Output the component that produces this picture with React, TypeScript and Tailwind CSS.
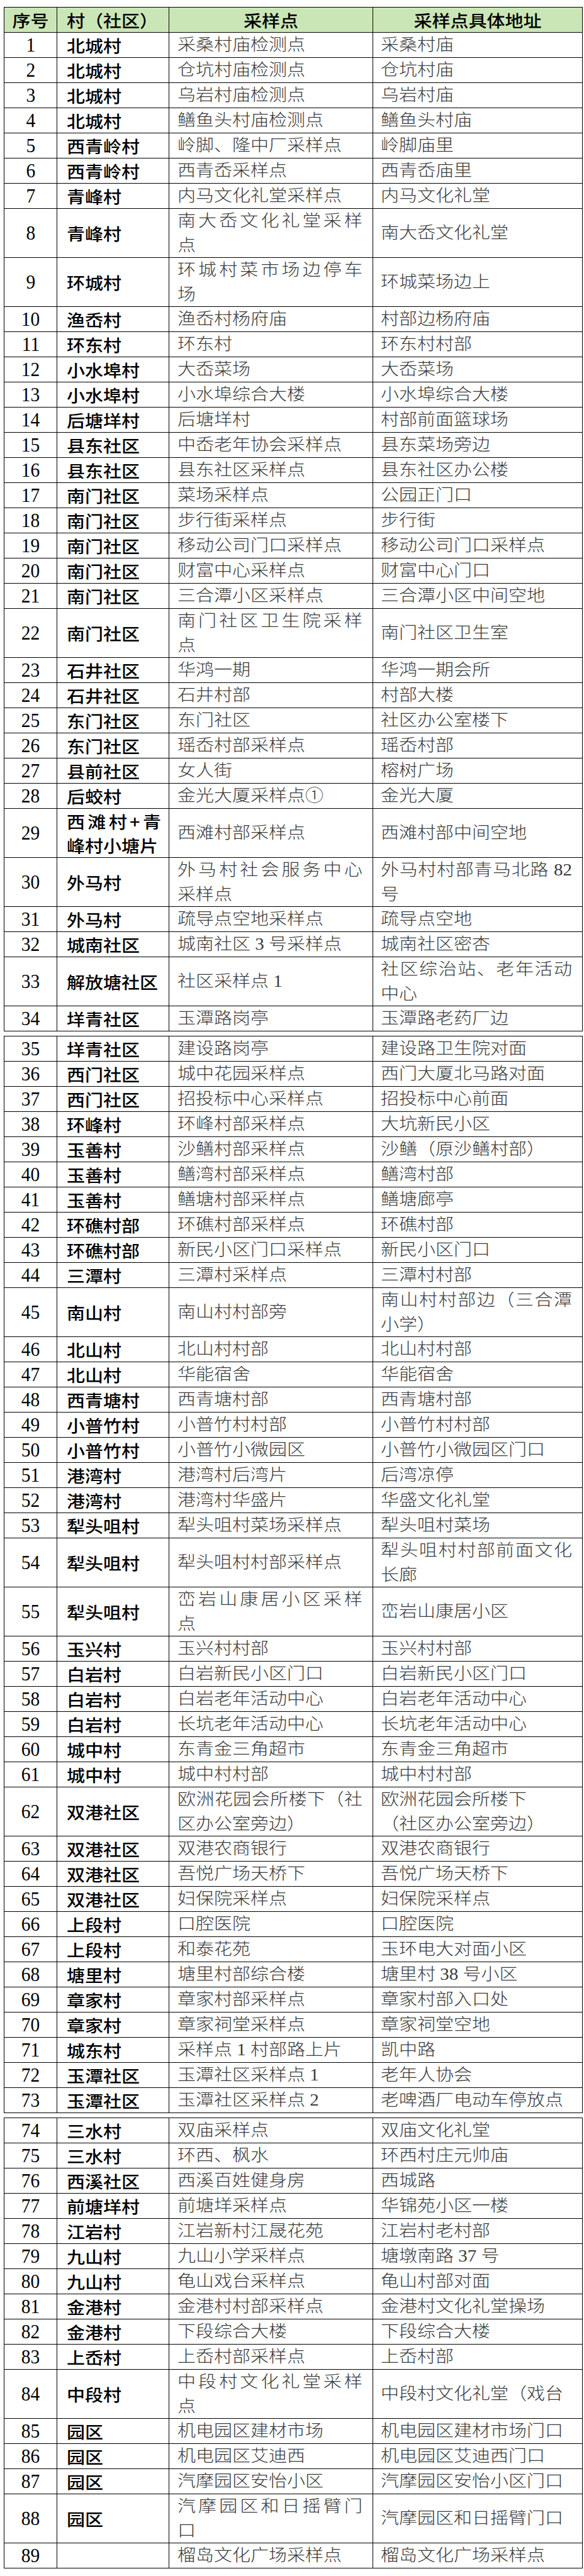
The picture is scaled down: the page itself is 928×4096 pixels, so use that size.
import React from "react";

const RAW = `1|北城村|采桑村庙检测点|采桑村庙
2|北城村|仓坑村庙检测点|仓坑村庙
3|北城村|乌岩村庙检测点|乌岩村庙
4|北城村|鳝鱼头村庙检测点|鳝鱼头村庙
5|西青岭村|岭脚、隆中厂采样点|岭脚庙里
6|西青岭村|西青岙采样点|西青岙庙里
7|青峰村|内马文化礼堂采样点|内马文化礼堂
8|青峰村|南大岙文化礼堂采样/点|南大岙文化礼堂
9|环城村|环城村菜市场边停车/场|环城菜场边上
10|渔岙村|渔岙村杨府庙|村部边杨府庙
11|环东村|环东村|环东村村部
12|小水埠村|大岙菜场|大岙菜场
13|小水埠村|小水埠综合大楼|小水埠综合大楼
14|后塘垟村|后塘垟村|村部前面篮球场
15|县东社区|中岙老年协会采样点|县东菜场旁边
16|县东社区|县东社区采样点|县东社区办公楼
17|南门社区|菜场采样点|公园正门口
18|南门社区|步行街采样点|步行街
19|南门社区|移动公司门口采样点|移动公司门口采样点
20|南门社区|财富中心采样点|财富中心门口
21|南门社区|三合潭小区采样点|三合潭小区中间空地
22|南门社区|南门社区卫生院采样/点|南门社区卫生室
23|石井社区|华鸿一期|华鸿一期会所
24|石井社区|石井村部|村部大楼
25|东门社区|东门社区|社区办公室楼下
26|东门社区|瑶岙村部采样点|瑶岙村部
27|县前社区|女人街|榕树广场
28|后蛟村|金光大厦采样点①|金光大厦
29|西滩村+青/峰村小塘片|西滩村部采样点|西滩村部中间空地
30|外马村|外马村社会服务中心/采样点|外马村村部青马北路 82/号
31|外马村|疏导点空地采样点|疏导点空地
32|城南社区|城南社区 3 号采样点|城南社区密杏
33|解放塘社区|社区采样点 1|社区综治站、老年活动/中心
34|垟青社区|玉潭路岗亭|玉潭路老药厂边
#
35|垟青社区|建设路岗亭|建设路卫生院对面
36|西门社区|城中花园采样点|西门大厦北马路对面
37|西门社区|招投标中心采样点|招投标中心前面
38|环峰村|环峰村部采样点|大坑新民小区
39|玉善村|沙鳝村部采样点|沙鳝（原沙鳝村部）
40|玉善村|鳝湾村部采样点|鳝湾村部
41|玉善村|鳝塘村部采样点|鳝塘廊亭
42|环礁村部|环礁村部采样点|环礁村部
43|环礁村部|新民小区门口采样点|新民小区门口
44|三潭村|三潭村采样点|三潭村村部
45|南山村|南山村村部旁|南山村村部边（三合潭/小学）
46|北山村|北山村村部|北山村村部
47|北山村|华能宿舍|华能宿舍
48|西青塘村|西青塘村部|西青塘村部
49|小普竹村|小普竹村村部|小普竹村村部
50|小普竹村|小普竹小微园区|小普竹小微园区门口
51|港湾村|港湾村后湾片|后湾凉停
52|港湾村|港湾村华盛片|华盛文化礼堂
53|犁头咀村|犁头咀村菜场采样点|犁头咀村菜场
54|犁头咀村|犁头咀村村部采样点|犁头咀村村部前面文化/长廊
55|犁头咀村|峦岩山康居小区采样/点|峦岩山康居小区
56|玉兴村|玉兴村村部|玉兴村村部
57|白岩村|白岩新民小区门口|白岩新民小区门口
58|白岩村|白岩老年活动中心|白岩老年活动中心
59|白岩村|长坑老年活动中心|长坑老年活动中心
60|城中村|东青金三角超市|东青金三角超市
61|城中村|城中村村部|城中村村部
62|双港社区|欧洲花园会所楼下（社/区办公室旁边）|欧洲花园会所楼下^（社区办公室旁边）
63|双港社区|双港农商银行|双港农商银行
64|双港社区|吾悦广场天桥下|吾悦广场天桥下
65|双港社区|妇保院采样点|妇保院采样点
66|上段村|口腔医院|口腔医院
67|上段村|和泰花苑|玉环电大对面小区
68|塘里村|塘里村部综合楼|塘里村 38 号小区
69|章家村|章家村部采样点|章家村部入口处
70|章家村|章家祠堂采样点|章家祠堂空地
71|城东村|采样点 1 村部路上片|凯中路
72|玉潭社区|玉潭社区采样点 1|老年人协会
73|玉潭社区|玉潭社区采样点 2|老啤酒厂电动车停放点
#
74|三水村|双庙采样点|双庙文化礼堂
75|三水村|环西、枫水|环西村庄元帅庙
76|西溪社区|西溪百姓健身房|西城路
77|前塘垟村|前塘垟采样点|华锦苑小区一楼
78|江岩村|江岩新村江晟花苑|江岩村老村部
79|九山村|九山小学采样点|塘墩南路 37 号
80|九山村|龟山戏台采样点|龟山村部对面
81|金港村|金港村村部采样点|金港村文化礼堂操场
82|金港村|下段综合大楼|下段综合大楼
83|上岙村|上岙村部采样点|上岙村部
84|中段村|中段村文化礼堂采样/点|中段村文化礼堂（戏台
85|园区|机电园区建材市场|机电园区建材市场门口
86|园区|机电园区艾迪西|机电园区艾迪西门口
87|园区|汽摩园区安怡小区|汽摩园区安怡小区门口
88|园区|汽摩园区和日摇臂门/口|汽摩园区和日摇臂门口
89||榴岛文化广场采样点|榴岛文化广场采样点`;

type R = { n: string; v: string; a: string; b: string };

const segments: R[][] = RAW.split("#").map((seg) =>
  seg
    .trim()
    .split("\n")
    .map((l) => {
      const [n, v, a, b] = l.split("|");
      return { n, v, a, b };
    })
);

function Txt({ s, w }: { s: string; w: string }) {
  if (s.includes("/")) {
    const [x, y] = s.split("/");
    return (
      <div className="scale-y-[0.92] leading-[41.7px]">
        <div className={`${w} text-justify [text-align-last:justify]`}>{x}</div>
        <div className="whitespace-nowrap">{y}</div>
      </div>
    );
  }
  if (s.includes("^")) {
    const [x, y] = s.split("^");
    return (
      <div className="scale-y-[0.92] leading-[41.7px]">
        <div className="whitespace-nowrap">{x}</div>
        <div className="whitespace-nowrap">{y}</div>
      </div>
    );
  }
  return <div className="scale-y-[0.92] whitespace-nowrap leading-none">{s}</div>;
}

function Row({ r }: { r: R }) {
  const tall = [r.v, r.a, r.b].some((s) => s.includes("/") || s.includes("^"));
  return (
    <div className={`flex border-b border-black ${tall ? "h-[78px]" : "h-[40px]"}`}>
      <div className="w-[85px] shrink-0 border-l border-r border-black flex items-center justify-center font-['Liberation_Serif',serif] text-[31px] text-black leading-none">
        <div className="scale-x-[0.95]">{r.n}</div>
      </div>
      <div className="w-[178px] shrink-0 border-r border-black flex items-center pl-[15px] font-['Noto_Sans_CJK_SC',sans-serif] font-medium text-[29px] text-black">
        <Txt s={r.v} w="w-[150px]" />
      </div>
      <div className="w-[324px] shrink-0 border-r border-black flex items-center pl-[13px] font-['Liberation_Serif','Noto_Sans_CJK_SC',serif] font-light text-[29px] text-[#3a3a3a]">
        <Txt s={r.a} w="w-[294px]" />
      </div>
      <div className="w-[333px] shrink-0 border-r border-black flex items-center pl-[12px] font-['Liberation_Serif','Noto_Sans_CJK_SC',serif] font-light text-[29px] text-[#3a3a3a]">
        <Txt s={r.b} w="w-[304px]" />
      </div>
    </div>
  );
}

function Header() {
  return (
    <div className="flex h-[40px] border-b border-black bg-[#cbe6b6] font-['Noto_Sans_CJK_SC',sans-serif] font-medium text-[29px] text-black leading-none">
      <div className="w-[85px] shrink-0 border-l border-r border-black flex items-center justify-center">
        <div className="scale-y-[0.92]">序号</div>
      </div>
      <div className="w-[178px] shrink-0 border-r border-black flex items-center pl-[15px]">
        <div className="scale-y-[0.92] whitespace-nowrap">村（社区）</div>
      </div>
      <div className="w-[324px] shrink-0 border-r border-black flex items-center justify-center">
        <div className="scale-y-[0.92]">采样点</div>
      </div>
      <div className="w-[333px] shrink-0 border-r border-black flex items-center justify-center">
        <div className="scale-y-[0.92]">采样点具体地址</div>
      </div>
    </div>
  );
}

export default function App() {
  return (
    <div lang="zh-CN" className="w-[928px] bg-white pt-[11px] pb-[12px]">
      {segments.map((seg, i) => (
        <div
          key={i}
          className={`ml-[6px] w-[920px] border-t border-black ${i > 0 ? "mt-[7px]" : ""}`}
        >
          {i === 0 && <Header />}
          {seg.map((r) => (
            <Row key={r.n} r={r} />
          ))}
        </div>
      ))}
    </div>
  );
}
